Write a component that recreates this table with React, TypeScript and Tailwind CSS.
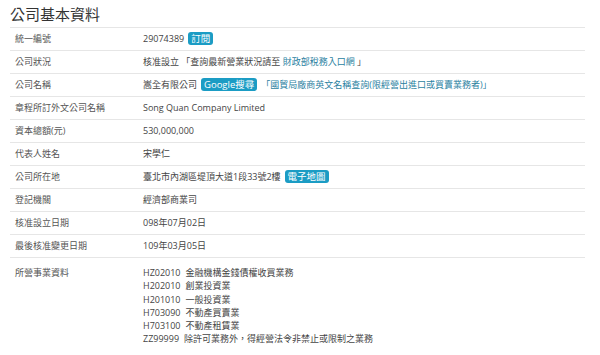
const Badge = ({ children }: { children: React.ReactNode }) => (
  <span className="ml-[4px] inline-block rounded-[3px] bg-[#1b9cc4] px-[3px] text-[9.5px] leading-[13px] text-white">
    {children}
  </span>
);

const business = [
  ['HZ02010', '金融機構金錢債權收買業務'],
  ['H202010', '創業投資業'],
  ['H201010', '一般投資業'],
  ['H703090', '不動產買賣業'],
  ['H703100', '不動產租賃業'],
  ['ZZ99999', '除許可業務外，得經營法令非禁止或限制之業務'],
];

export default function App() {
  const data: { label: string; value: React.ReactNode }[] = [
    {
      label: '統一編號',
      value: (
        <>
          29074389<Badge>訂閱</Badge>
        </>
      ),
    },
    {
      label: '公司狀況',
      value: (
        <>
          核准設立 「查詢最新營業狀況請至 <span className="text-[#2a7f9f]">財政部稅務入口網</span> 」
        </>
      ),
    },
    {
      label: '公司名稱',
      value: (
        <>
          嵩全有限公司<Badge>Google搜尋</Badge>
          <span className="ml-[4px] text-[#2a7f9f]">「國貿局廠商英文名稱查詢(限經營出進口或買賣業務者)」</span>
        </>
      ),
    },
    { label: '章程所訂外文公司名稱', value: 'Song Quan Company Limited' },
    { label: '資本總額(元)', value: '530,000,000' },
    { label: '代表人姓名', value: '宋學仁' },
    {
      label: '公司所在地',
      value: (
        <>
          臺北市內湖區堤頂大道1段33號2樓<Badge>電子地圖</Badge>
        </>
      ),
    },
    { label: '登記機關', value: '經濟部商業司' },
    { label: '核准設立日期', value: '098年07月02日' },
    { label: '最後核准變更日期', value: '109年03月05日' },
  ];

  return (
    <div
      className="h-[355px] w-[600px] overflow-hidden bg-white px-[10px] text-[9px] text-[#444]"
      style={{ fontFamily: '"Open Sans", "Noto Sans CJK TC", sans-serif' }}
    >
      <h1 className="h-[27px] pt-[4px] text-[15px] leading-[20px] text-[#333]">公司基本資料</h1>
      <div className="w-[575px] border-t border-[#e6e6e6]">
        {data.map((r) => (
          <div key={r.label} className="flex h-[23px] items-center border-b border-[#e6e6e6]">
            <div className="w-[133px] shrink-0 pl-[5px] text-[#555]">{r.label}</div>
            <div className="whitespace-nowrap text-[#444]">{r.value}</div>
          </div>
        ))}
        <div className="flex border-b border-[#e6e6e6] pt-[8px] pb-[13px]">
          <div className="w-[133px] shrink-0 pl-[5px] leading-[13.3px] text-[#555]">所營事業資料</div>
          <div className="leading-[13.3px] text-[#444]">
            {business.map(([code, desc]) => (
              <div key={code} className="flex gap-[5px] whitespace-nowrap">
                <span>{code}</span>
                <span>{desc}</span>
              </div>
            ))}
          </div>
        </div>
      </div>
    </div>
  );
}
